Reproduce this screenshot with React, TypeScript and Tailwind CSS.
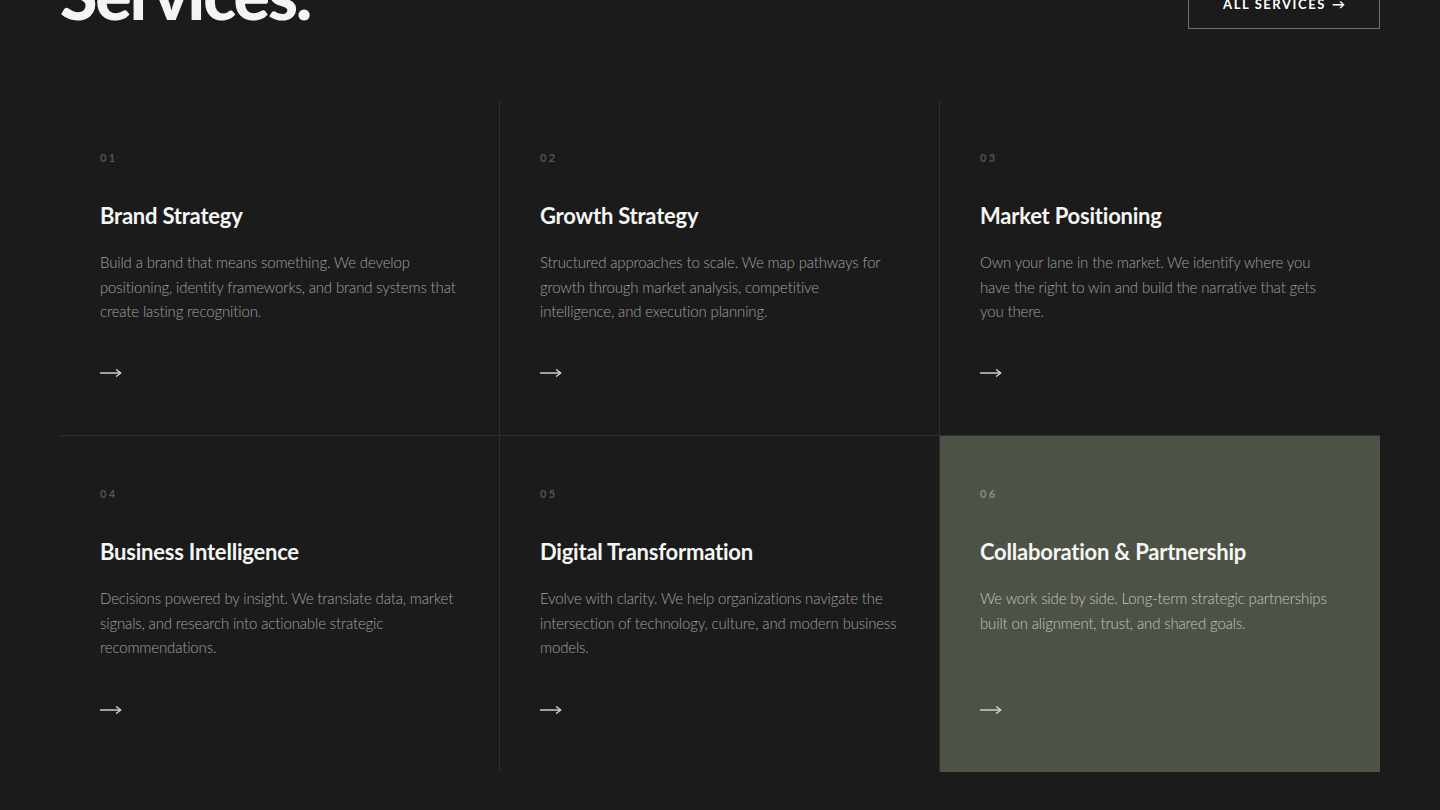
const services = [
  {
    num: '01',
    title: 'Brand Strategy',
    body: [
      'Build a brand that means something. We develop',
      'positioning, identity frameworks, and brand systems that',
      'create lasting recognition.',
    ],
  },
  {
    num: '02',
    title: 'Growth Strategy',
    body: [
      'Structured approaches to scale. We map pathways for',
      'growth through market analysis, competitive',
      'intelligence, and execution planning.',
    ],
  },
  {
    num: '03',
    title: 'Market Positioning',
    body: [
      'Own your lane in the market. We identify where you',
      'have the right to win and build the narrative that gets',
      'you there.',
    ],
  },
  {
    num: '04',
    title: 'Business Intelligence',
    body: [
      'Decisions powered by insight. We translate data, market',
      'signals, and research into actionable strategic',
      'recommendations.',
    ],
  },
  {
    num: '05',
    title: 'Digital Transformation',
    body: [
      'Evolve with clarity. We help organizations navigate the',
      'intersection of technology, culture, and modern business',
      'models.',
    ],
  },
  {
    num: '06',
    title: 'Collaboration & Partnership',
    body: [
      'We work side by side. Long-term strategic partnerships',
      'built on alignment, trust, and shared goals.',
    ],
    active: true,
  },
];

// interior grid lines only: right edge on first two columns, bottom edge on first row
const borders = [
  'border-r border-b',
  'border-r border-b',
  'border-b',
  'border-r',
  'border-r',
  '',
];

function LongArrow() {
  return (
    <svg width="22" height="10" viewBox="0 0 22 10" fill="none" stroke="currentColor" strokeWidth="1.4">
      <path d="M0 5h20.5" />
      <path d="M16.5 1.8L20.8 5l-4.3 3.2" strokeLinejoin="round" strokeLinecap="round" />
    </svg>
  );
}

export default function App() {
  return (
    <div
      className="min-h-[810px] bg-[#1b1b1b] text-white"
      style={{ fontFamily: 'Lato, "Noto Sans", sans-serif' }}
    >
      <section className="mx-auto w-[1320px] -mt-[40px] pb-10">
        <header className="flex items-end justify-between">
          <h2 className="text-[68px] font-black leading-none tracking-[-0.03em] text-[#f4f4f2]">
            Services.
          </h2>
          <a
            href="#"
            className="mb-[-1px] flex h-[48px] w-[192px] items-center justify-center border border-[#6e6e6e] text-[13px] font-bold tracking-[0.12em] text-white"
          >
            ALL SERVICES <span className="ml-1.5 tracking-normal">→</span>
          </a>
        </header>

        <div className="mt-[72px] grid grid-cols-3">
          {services.map((s, i) => (
            <article
              key={s.num}
              className={`flex h-[336px] flex-col border-[#2f2f2f] px-10 pt-12 pb-[50px] ${borders[i]} ${
                s.active ? 'bg-[#4d5246]' : ''
              }`}
            >
              <div
                className={`text-[11px] font-bold leading-5 tracking-[0.22em] ${
                  s.active ? 'text-[#8b8f84]' : 'text-[#555555]'
                }`}
              >
                {s.num}
              </div>
              <h3 className="mt-[34px] text-[22px] font-bold leading-7 tracking-[-0.01em] text-[#f5f5f3]">
                {s.title}
              </h3>
              <p
                className={`mt-5 text-[15px] font-light leading-[24.5px] tracking-[-0.01em] whitespace-nowrap ${
                  s.active ? 'text-[#c3c5bd]' : 'text-[#a0a0a0]'
                }`}
              >
                {s.body.map((line, j) => (
                  <span key={j} className="block">
                    {line}
                  </span>
                ))}
              </p>
              <span className="mt-auto flex h-6 items-center text-[#ddd6cb]">
                <LongArrow />
              </span>
            </article>
          ))}
        </div>
      </section>
    </div>
  );
}
